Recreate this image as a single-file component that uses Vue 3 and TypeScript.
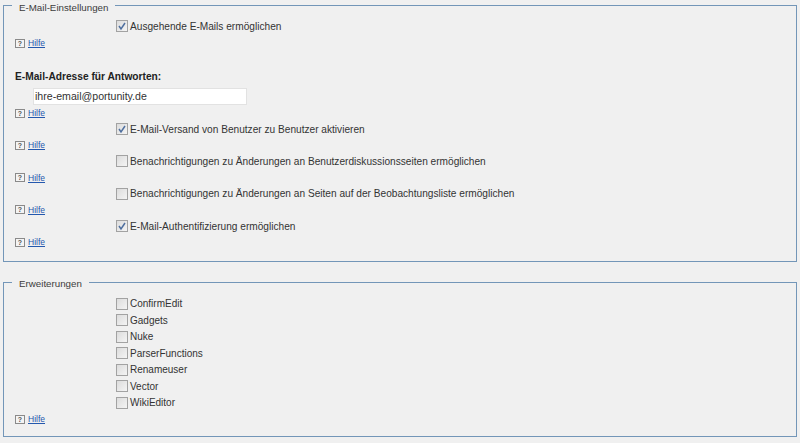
<script setup lang="ts">
interface Row { kind: 'check' | 'help'; text?: string; checked?: boolean }
const first: Row[] = [
  { kind: 'check', text: 'E-Mail-Versand von Benutzer zu Benutzer aktivieren', checked: true },
  { kind: 'help' },
  { kind: 'check', text: 'Benachrichtigungen zu Änderungen an Benutzerdiskussionsseiten ermöglichen' },
  { kind: 'help' },
  { kind: 'check', text: 'Benachrichtigungen zu Änderungen an Seiten auf der Beobachtungsliste ermöglichen' },
  { kind: 'help' },
  { kind: 'check', text: 'E-Mail-Authentifizierung ermöglichen', checked: true },
  { kind: 'help' },
]
const extensions: string[] = ['ConfirmEdit', 'Gadgets', 'Nuke', 'ParserFunctions', 'Renameuser', 'Vector', 'WikiEditor']
</script>

<template>
  <div class="page">
    <fieldset class="box box-mail">
      <legend>E-Mail-Einstellungen</legend>
      <div class="row check-row">
        <span class="cb"><svg viewBox="0 0 12 12" width="12" height="12"><path d="M3 6 L5 9 L9 3" fill="none" stroke="#4f6f9f" stroke-width="1.5" /></svg></span>
        <label>Ausgehende E-Mails ermöglichen</label>
      </div>
      <div class="row help-row first-help"><span class="q">?</span><a>Hilfe</a></div>
      <div class="field-label">E-Mail-Adresse für Antworten:</div>
      <input class="mail" value="ihre-email@portunity.de" />
      <div class="row help-row"><span class="q">?</span><a>Hilfe</a></div>
      <template v-for="(r, i) in first" :key="i">
        <div v-if="r.kind === 'check'" class="row check-row">
          <span class="cb"><svg v-if="r.checked" viewBox="0 0 12 12" width="12" height="12"><path d="M3 6 L5 9 L9 3" fill="none" stroke="#4f6f9f" stroke-width="1.5" /></svg></span>
          <label>{{ r.text }}</label>
        </div>
        <div v-else class="row help-row"><span class="q">?</span><a>Hilfe</a></div>
      </template>
    </fieldset>
    <fieldset class="box box-ext">
      <legend>Erweiterungen</legend>
      <div v-for="e in extensions" :key="e" class="row ext-row check-row">
        <span class="cb"></span>
        <label class="ext-label">{{ e }}</label>
      </div>
      <div class="row ext-row help-row"><span class="q">?</span><a>Hilfe</a></div>
    </fieldset>
  </div>
</template>

<style scoped>
.page {
  width: 800px;
  height: 443px;
  box-sizing: border-box;
  background: #f0f0f0;
  padding: 0 3px;
  overflow: hidden;
  font-family: "Liberation Sans", Arial, sans-serif;
  font-size: 10.15px;
  color: #333;
}
.box {
  margin: 0;
  padding: 8px 0 0;
  border: 1px solid #7396b8;
  min-width: 0;
  box-sizing: border-box;
}
.box-mail { height: 262px; }
.box-ext { height: 160px; margin-top: 15px; padding-top: 8.6px; }
legend {
  margin-left: 8px;
  padding: 0 7px;
  height: 10px;
  line-height: 15px;
  font-size: 9.75px;
  color: #3c3c3c;
}
.box-ext legend { line-height: 13px; }
.row {
  display: flex;
  align-items: center;
  height: 16.15px;
}
.ext-row { height: 16.5px; }
.check-row { padding-left: 112px; gap: 2px; }
.help-row { padding-left: 11px; gap: 3px; }
.first-help { margin-top: 0.85px; }
.ext-label { font-size: 10px; }
.cb {
  width: 12px;
  height: 12px;
  box-sizing: border-box;
  border: 1px solid #a2a2a2;
  background: linear-gradient(135deg, #dcdcdc, #f4f4f4);
  display: flex;
  align-items: center;
  justify-content: center;
  flex: none;
}
.cb svg { flex: none; }
.q {
  width: 10px;
  height: 9px;
  box-sizing: border-box;
  border: 1px solid #8a8a8a;
  background: #f4f4f4;
  font-size: 7px;
  line-height: 7px;
  text-align: center;
  font-weight: bold;
  color: #555;
  flex: none;
}
a {
  font-size: 8.5px;
  color: #2558ad;
  text-decoration: underline;
}
.field-label {
  margin: 18px 0 0 11px;
  height: 16px;
  line-height: 16px;
  font-size: 10.2px;
  font-weight: bold;
  color: #222;
}
.mail {
  display: block;
  margin: 2.85px 0 0 29px;
  width: 214px;
  height: 17px;
  box-sizing: border-box;
  padding: 0 1px;
  border: 1px solid #e2e2e2;
  background: #fff;
  font-family: inherit;
  font-size: 10.6px;
  color: #333;
  outline: none;
}
</style>

<style>
html, body { background: #f0f0f0; }
</style>
